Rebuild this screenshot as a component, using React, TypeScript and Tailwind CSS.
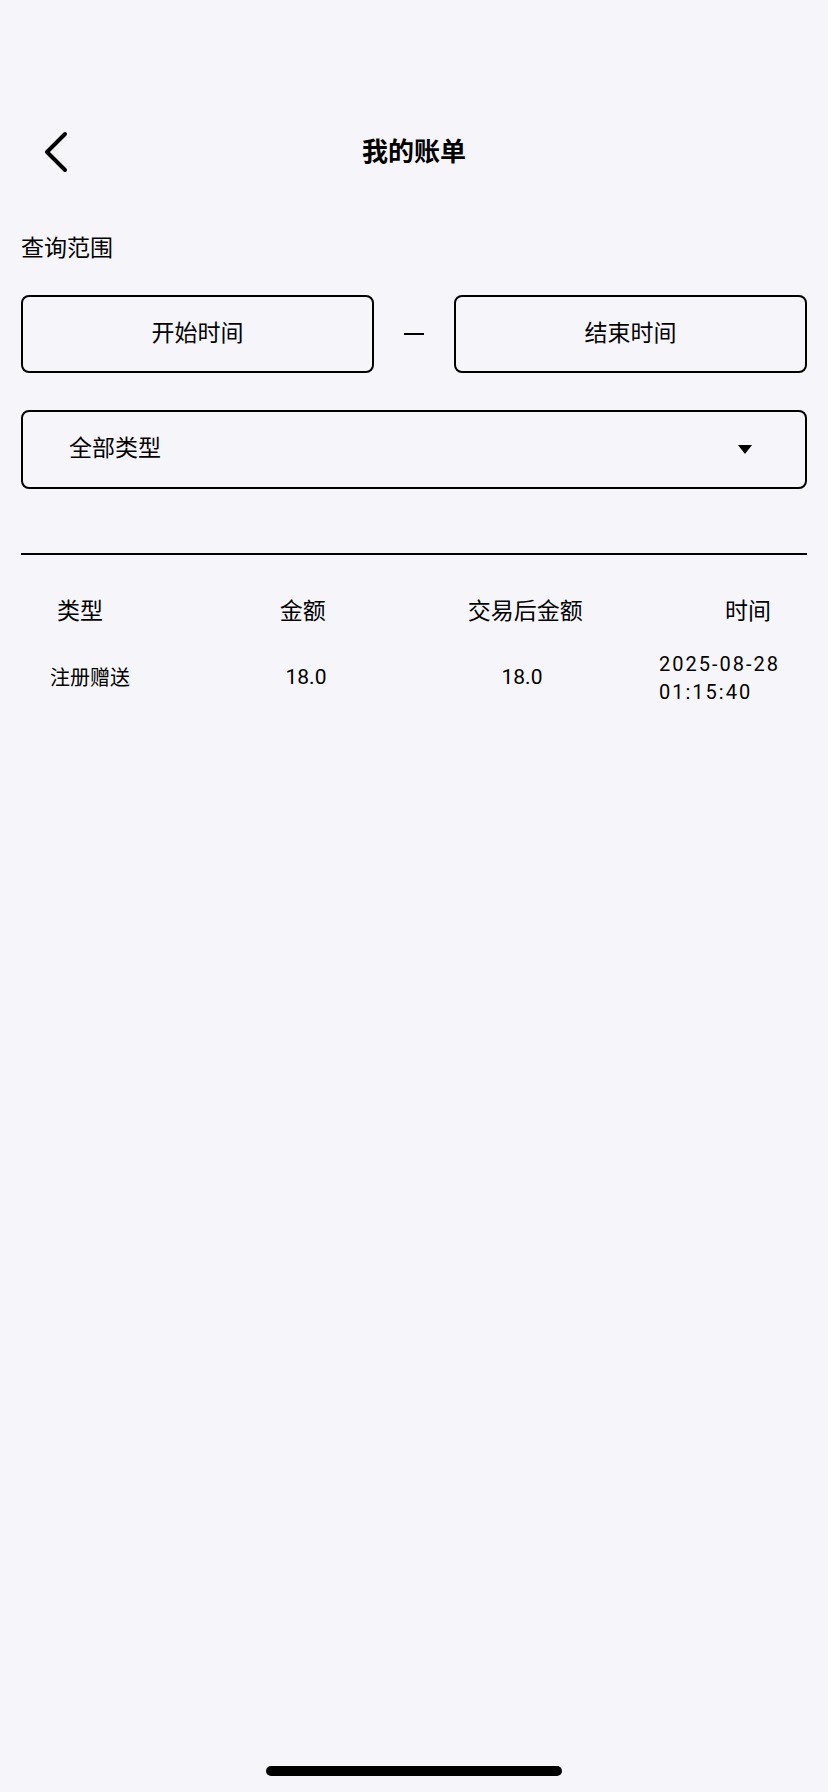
import React from "react";

const font = {
  fontFamily: 'Roboto, "Noto Sans CJK SC", "Noto Sans", sans-serif',
};

function BackIcon() {
  return (
    <svg width="26" height="42" viewBox="0 0 26 42" fill="none">
      <path
        d="M22 3 L4 21 L22 39"
        stroke="#000"
        strokeWidth="4"
        strokeLinecap="round"
        strokeLinejoin="round"
      />
    </svg>
  );
}

export default function App() {
  return (
    <div
      className="relative min-h-[1792px] w-full bg-[#f6f6fa] text-black"
      style={font}
    >
      <div className="px-[21px] pt-[120px]">
        {/* 标题栏 */}
        <header className="relative flex h-[64px] items-center justify-center">
          <button className="absolute left-[22px] top-[11px]">
            <BackIcon />
          </button>
          <h1 className="text-[26px] font-bold leading-none">我的账单</h1>
        </header>

        {/* 查询范围 */}
        <div className="mt-[49px] text-[23px] leading-[32px]">查询范围</div>

        <div className="mt-[30px] flex items-center">
          <div className="flex h-[78px] w-[353px] items-center justify-center rounded-[8px] border-2 border-black text-[23px]">
            开始时间
          </div>
          <div className="flex flex-1 items-center justify-center">
            <div className="h-[2px] w-[20px] bg-black" />
          </div>
          <div className="flex h-[78px] w-[353px] items-center justify-center rounded-[8px] border-2 border-black text-[23px]">
            结束时间
          </div>
        </div>

        {/* 类型下拉 */}
        <div className="mt-[37px] flex h-[79px] items-center justify-between rounded-[8px] border-2 border-black pl-[46px] pr-[53px]">
          <span className="text-[23px]">全部类型</span>
          <svg width="14" height="9" viewBox="0 0 14 9">
            <path d="M0 0 H14 L7 9 Z" fill="#000" />
          </svg>
        </div>

        <div className="mt-[64px] h-[2px] bg-black" />
      </div>

      {/* 表头 */}
      <div className="mt-[41px] flex justify-between px-[20px] text-[23px] leading-[32px]">
        <div className="w-[120px] text-center">类型</div>
        <div className="w-[120px] text-center">金额</div>
        <div className="w-[120px] text-center">交易后金额</div>
        <div className="w-[120px] text-center">时间</div>
      </div>

      {/* 账单列表 */}
      <div className="mt-[22px] flex items-center pl-[30px] text-[20px]">
        <div className="w-[120px] text-center">注册赠送</div>
        <div className="ml-[96px] w-[120px] text-center text-[21px]">18.0</div>
        <div className="ml-[96px] w-[120px] text-center text-[21px]">18.0</div>
        <div className="ml-[77px] text-[20px] leading-[28px] tracking-[2px]">
          <div>2025-08-28</div>
          <div>01:15:40</div>
        </div>
      </div>

      {/* Home 指示条 */}
      <div className="absolute bottom-[16px] left-1/2 h-[10px] w-[296px] -translate-x-1/2 rounded-full bg-black" />
    </div>
  );
}
